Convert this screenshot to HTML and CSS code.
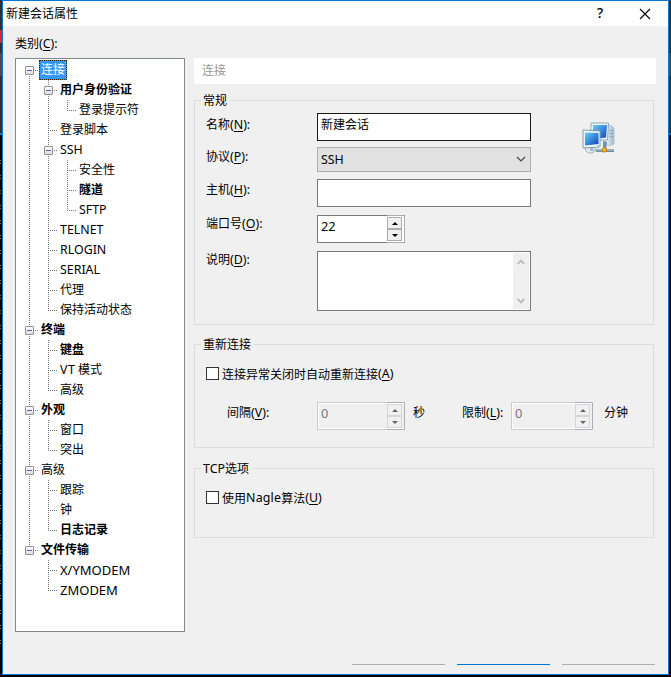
FILE: index.html
```html
<!DOCTYPE html>
<html lang="zh-CN">
<head>
<meta charset="utf-8">
<title>新建会话属性</title>
<link rel="stylesheet" href="styles.css">
</head>
<body>
<div class="desk desk-left"></div>
<main class="dialog">
  <header class="titlebar">
    <span class="title">新建会话属性</span>
    <span class="help">?</span>
    <svg class="close" width="12" height="12" viewBox="0 0 12 12"><path d="M1 1L11 11M11 1L1 11"/></svg>
  </header>
  <div class="content">
    <section class="sidebar">
      <div class="caption">类别<b class="en">(<u>C</u>):</b></div>
      <div class="tree">
        <div class="row"><i class="first"><s></s></i><span class="selected">连接</span></div>
        <div class="row"><i class="v"></i><i class="t"><s></s></i><span class="bold">用户身份验证</span></div>
        <div class="row"><i class="v"></i><i class="v"></i><i class="l"></i><span>登录提示符</span></div>
        <div class="row"><i class="v"></i><i class="t"></i><span>登录脚本</span></div>
        <div class="row"><i class="v"></i><i class="t"><s></s></i><span class="en">SSH</span></div>
        <div class="row"><i class="v"></i><i class="v"></i><i class="t"></i><span>安全性</span></div>
        <div class="row"><i class="v"></i><i class="v"></i><i class="t"></i><span class="bold">隧道</span></div>
        <div class="row"><i class="v"></i><i class="v"></i><i class="l"></i><span class="en">SFTP</span></div>
        <div class="row"><i class="v"></i><i class="t"></i><span class="en">TELNET</span></div>
        <div class="row"><i class="v"></i><i class="t"></i><span class="en">RLOGIN</span></div>
        <div class="row"><i class="v"></i><i class="t"></i><span class="en">SERIAL</span></div>
        <div class="row"><i class="v"></i><i class="t"></i><span>代理</span></div>
        <div class="row"><i class="v"></i><i class="l"></i><span>保持活动状态</span></div>
        <div class="row"><i class="t"><s></s></i><span class="bold">终端</span></div>
        <div class="row"><i class="v"></i><i class="t"></i><span class="bold">键盘</span></div>
        <div class="row"><i class="v"></i><i class="t"></i><span><b class="en vt">VT</b> 模式</span></div>
        <div class="row"><i class="v"></i><i class="l"></i><span>高级</span></div>
        <div class="row"><i class="t"><s></s></i><span class="bold">外观</span></div>
        <div class="row"><i class="v"></i><i class="t"></i><span>窗口</span></div>
        <div class="row"><i class="v"></i><i class="l"></i><span>突出</span></div>
        <div class="row"><i class="t"><s></s></i><span>高级</span></div>
        <div class="row"><i class="v"></i><i class="t"></i><span>跟踪</span></div>
        <div class="row"><i class="v"></i><i class="t"></i><span>钟</span></div>
        <div class="row"><i class="v"></i><i class="l"></i><span class="bold">日志记录</span></div>
        <div class="row"><i class="l"><s></s></i><span class="bold">文件传输</span></div>
        <div class="row"><i></i><i class="t"></i><span class="en wide">X/YMODEM</span></div>
        <div class="row"><i></i><i class="l"></i><span class="en wide">ZMODEM</span></div>
      </div>
    </section>

    <section class="page">
      <div class="page-head">连接</div>

      <div class="group general">
        <div class="legend">常规</div>
        <div class="general-body">
          <div class="fields">
            <label class="lab name">名称<b class="en">(<u>N</u>):</b></label><div class="input focused">新建会话</div>
            <label class="lab proto">协议<b class="en">(<u>P</u>):</b></label>
            <div class="select"><span class="en">SSH</span><svg width="10" height="7" viewBox="0 0 10 7"><path d="M1 1L5 5L9 1"/></svg></div>
            <label class="lab host">主机<b class="en">(<u>H</u>):</b></label><div class="input"></div>
            <label class="lab">端口号<b class="en">(<u>O</u>):</b></label>
            <div class="spin"><div class="value">22</div><div class="arrows"><div><em class="up"></em></div><div><em class="down"></em></div></div></div>
            <label class="lab">说明<b class="en">(<u>D</u>):</b></label>
            <div class="textarea"><div class="scroll">
              <svg width="8" height="6" viewBox="0 0 8 6"><path d="M.7 5L4 1.6L7.300 5"/></svg>
              <svg width="8" height="6" viewBox="0 0 8 6"><path d="M.7 1L4 4.400L7.300 1"/></svg>
            </div></div>
          </div>
          <svg class="session" width="34" height="34" viewBox="0 0 34 34">
            <defs><linearGradient id="screen" x1="0" y1="0" x2="1" y2="1"><stop offset="0" stop-color="#6ec9f4"/><stop offset=".5" stop-color="#398bdc"/><stop offset="1" stop-color="#1538ac"/></linearGradient>
            <linearGradient id="tower"><stop offset="0" stop-color="#f7fafc"/><stop offset="1" stop-color="#9fbaca"/></linearGradient></defs>
            <path d="M25 3L29 3.500L32 6V22L27 24L23 22Z" fill="url(#tower)" stroke="#a5bac7" stroke-width=".7"/>
            <path d="M27 8L31 9M27 11L31 12M27 14L31 15" stroke="#7896aa" stroke-width=".7"/>
            <path d="M9 1H26.500L25.500 18H9Z" fill="#eff6fa" stroke="#8babbe"/>
            <path d="M11 3H25L24 15.500L11 17Z" fill="url(#screen)"/>
            <path d="M21 19L25 20L24 28H21Z" fill="#6e8ea3"/>
            <path d="M3 26Q4 32 10 31L14 28L12 25Z" fill="#e5edf1" stroke="#9db0bb"/>
            <path d="M8 25L11 25L12 29H8Z" fill="#a4bbc8"/>
            <path d="M1 8L18 9V25L1 26Z" fill="#eff6fa" stroke="#7f9fb2"/>
            <path d="M3 10.500L16.500 11V22L3 23.500Z" fill="url(#screen)"/>
            <path d="M14 28.500H32" stroke="#6e8998" stroke-width="3"/><path d="M14 28H32" stroke="#c2d5df"/>
            <path d="M22.500 20V27" stroke="#7898ab" stroke-width="2"/>
            <rect x="20.500" y="26" width="4" height="4" fill="#f29a08" stroke="#c67b19" stroke-width=".6"/><rect x="21" y="26.500" width="2" height="2" fill="#ffd044"/>
            <circle cx="16" cy="23.500" r=".7" fill="#68d23e"/>
          </svg>
        </div>
      </div>

      <div class="group reconnect">
        <div class="legend">重新连接</div>
        <div class="check"><span class="box"></span>连接异常关闭时自动重新连接<b class="en">(<u>A</u>)</b></div>
        <div class="limits">
          <span class="gap-label">间隔<b class="en">(<u>V</u>):</b></span>
          <div class="spin disabled"><div class="value">0</div><div class="arrows"><div><em class="up"></em></div><div><em class="down"></em></div></div></div>
          <span class="sec">秒</span>
          <span class="limit-label">限制<b class="en">(<u>L</u>):</b></span>
          <div class="spin disabled short"><div class="value">0</div><div class="arrows"><div><em class="up"></em></div><div><em class="down"></em></div></div></div>
          <span class="min">分钟</span>
        </div>
      </div>

      <div class="group tcp">
        <div class="legend"><b class="en">TCP</b>选项</div>
        <div class="check"><span class="box"></span>使用<b class="en nagle">Nagle</b>算法<b class="en">(<u>U</u>)</b></div>
      </div>
      <footer class="buttons"><div></div><div class="default"></div><div></div></footer>
    </section>
  </div>
</main>
<div class="desk desk-right"></div>
</body>
</html>
```
FILE: styles.css
```css
* { box-sizing: border-box; }
body {
  margin: 0; width: 671px; height: 677px; overflow: hidden; display: flex;
  background: #000; color: #000;
  font: 12px/16px "Noto Sans CJK SC", sans-serif;
}
.en { font: normal 12.4px/16px "Noto Sans", "Noto Sans CJK SC", sans-serif; }
.wide { font-size: 13px; }
.vt { letter-spacing: .5px; }
.nagle { letter-spacing: .2px; }
u { text-decoration: underline; text-underline-offset: 2px; text-decoration-thickness: 1px; }
.desk { width: 2px; height: 677px; }
.desk-left {
  background:
    linear-gradient(#d02a2a, #d02a2a) 0 30px / 2px 13px no-repeat,
    linear-gradient(#4b4b4b, #4b4b4b) 0 53px / 2px 23px no-repeat,
    linear-gradient(#303030, #303030) 0 0 / 2px 133px no-repeat,
    linear-gradient(#0a78d0, #0a78d0) 0 133px / 2px 2px no-repeat,
    linear-gradient(#000, #000) 0 135px / 2px 22px no-repeat,
    linear-gradient(#000, #000) 0 650px / 2px 27px no-repeat,
    repeating-linear-gradient(#000 0 10px, #a86a32 10px 11px, #000 11px 13px, #a86a32 13px 14px, #000 14px 15px) 0 0 / 1px 677px no-repeat, #000;
}
.desk-right {
  background:
    linear-gradient(#4b4b4b, #4b4b4b) 0 53px / 2px 23px no-repeat,
    linear-gradient(#303030, #303030) 0 0 / 2px 133px no-repeat,
    linear-gradient(#0a78d0, #0a78d0) 0 133px / 2px 2px no-repeat, #000;
}
.dialog { width: 667px; height: 675px; border: 1px solid #0a78d0; background: #f0f0f0; }
.titlebar { height: 25px; background: #fff; display: flex; align-items: center; padding: 0 17px 0 3px; }
.title { flex: 1; margin-top: -2px; }
.help { font: 500 14px/16px "Noto Sans", sans-serif; width: 8px; margin: -1px 34px 0 0; }
.close { fill: none; stroke: #000; stroke-width: 1.1; }
.content { display: flex; padding: 10px 11px 0 12px; }
.sidebar { width: 170px; }
.caption { height: 22px; margin-top: -1px; margin-bottom: 1px; }
.tree { height: 574px; border: 1px solid #828790; background: #fff; padding: 1px 0 0 4px; }
.row { height: 20px; display: flex; white-space: nowrap; }
.row > span { padding: 0 2px; line-height: 18px; }
.row > .en { line-height: 20px; }
.bold { font-weight: 700; }
.row > i {
  --v: repeating-linear-gradient(#777 0 1px, transparent 1px 2px);
  --h: repeating-linear-gradient(90deg, #777 0 1px, transparent 1px 2px);
  width: 19px; height: 20px; padding: 6px 0 0 5px; background-repeat: no-repeat;
}
.row > .v { background: var(--v) 9px 0 / 1px 20px no-repeat; }
.row > .t { background: var(--v) 9px 0 / 1px 20px no-repeat, var(--h) 9px 10px / 9px 1px no-repeat; }
.row > .l { background: var(--v) 9px 0 / 1px 10px no-repeat, var(--h) 9px 10px / 9px 1px no-repeat; }
.row > .first { background: var(--v) 9px 10px / 1px 10px no-repeat, var(--h) 9px 10px / 9px 1px no-repeat; }
.row s {
  display: block; width: 9px; height: 9px; border: 1px solid #919191; border-radius: 1px;
  background: linear-gradient(#4b63a7, #4b63a7) center / 5px 1px no-repeat, linear-gradient(#fff, #ddd);
}
.row > .selected { height: 20px; line-height: 16px; padding: 0 1px; background: #39f; color: #fff; border: 1px dotted #382000; }
.page { width: 472px; padding: 22px 0 0 9px; }
.page-head { width: 462px; height: 26px; padding: 4px 8px; background: #fff; color: #999; }
.group { width: 460px; border: 1px solid #dcdcdc; padding-left: 11px; }
.legend { width: max-content; height: 16px; margin: -9px 0 0 -5px; padding: 0 3px 0 2px; background: #f0f0f0; }
.general { height: 225px; margin-top: 16px; }
.general-body { display: flex; padding-top: 5px; }
.fields {
  width: 325px; display: grid; grid-template-columns: 111px 214px;
  grid-template-rows: 34px 32px 36px 36px 60px; align-items: start;
}
.lab.name { padding-top: 3px; }
.lab.proto { padding-top: 1px; }
.lab.host { padding-top: 2px; }
.input { height: 28px; border: 1px solid #7a7a7a; background: #fff; padding: 2px 3px; }
.focused { border-color: #181818; }
.select { height: 25px; border: 1px solid #adadad; background: #e1e1e1; display: flex; align-items: center; justify-content: space-between; padding: 0 4px 0 3px; }
.select svg { fill: none; stroke: #444; stroke-width: 1.2; }
.spin { width: 88px; height: 28px; border: 1px solid #7a7a7a; border-right-color: #abadb3; background: #fff; display: flex; justify-content: space-between; }
.value { padding: 2px 3px; font: 12.8px/16px "Noto Sans", sans-serif; }
.arrows { width: 17px; height: 28px; margin-top: -1px; padding: 1px 1px 1px 0; border: solid #abadb3; border-width: 1px 0; }
.arrows div { width: 15px; height: 12px; border: 1px solid #adadad; background: #f0f0f0; display: flex; align-items: center; justify-content: center; }
.arrows em { width: 0; height: 0; border: 3px solid transparent; }
.arrows .up { border-top: 0; border-bottom-color: #000; }
.arrows .down { border-bottom: 0; border-top-color: #000; }
.disabled { border-color: #ccc #abadb3 #ccc #ccc; background: #f0f0f0; box-shadow: inset 1px 1px #fff, inset 0 -1px #fff; color: #777; }
.disabled .arrows div { border-color: #d5d5d5; }
.disabled .up { border-bottom-color: #666; }
.disabled .down { border-top-color: #666; }
.short { width: 82px; }
.textarea { height: 60px; border: 1px solid #7a7a7a; background: #fff; padding: 1px; display: flex; justify-content: flex-end; }
.scroll { width: 16px; background: #f0f0f0; display: flex; flex-direction: column; align-items: center; justify-content: space-between; padding: 6px 0 5px; }
.scroll svg { fill: none; stroke: #bdbdbd; stroke-width: 2; }
.session { margin: 9px 0 0 51px; }
.reconnect { height: 104px; margin-top: 19px; }
.check { display: flex; align-items: center; height: 16px; margin-top: 14px; }
.box { width: 13px; height: 13px; border: 1px solid #333; background: #fff; margin: -1px 3px 0 0; }
.limits { display: flex; margin-top: 20px; line-height: 16px; }
.limits > span { padding-top: 2px; }
.gap-label { width: 90px; margin-left: 21px; }
.sec { width: 49px; margin-left: 8px; }
.limit-label { width: 49px; }
.min { margin-left: 11px; }
.tcp { height: 70px; margin-top: 20px; }
.buttons { display: flex; gap: 12px; margin: 126px 0 0 158px; }
.buttons div { width: 93px; height: 1px; background: #adadad; }
.buttons .default { background: #0078d7; }
```
